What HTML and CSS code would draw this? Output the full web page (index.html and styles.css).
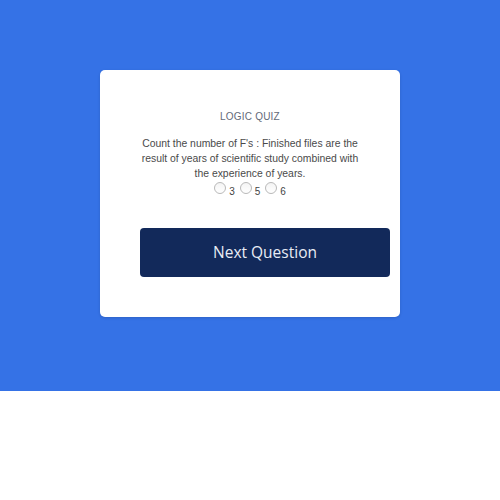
FILE: index.html
```html
<!DOCTYPE html>
<html>
<head>
<meta charset="utf-8">
<link rel="stylesheet" href="styles.css">
</head>
<body>
<section class="hero">
  <div class="card">
    <div class="title">LOGIC QUIZ</div>
    <p class="question">Count the number of F's : Finished files are the result of years of scientific study combined with the experience of years.</p>
    <div class="options"><label class="opt"><input type="radio" name="q">3</label><label class="opt"><input type="radio" name="q">5</label><label class="opt"><input type="radio" name="q">6</label></div>
    <button class="next">Next Question</button>
  </div>
</section>
</body>
</html>
```
FILE: styles.css
```css
html, body { margin: 0; padding: 0; background: #fff; }
body { font-family: "Liberation Sans", Arial, sans-serif; }
.hero {
  background: #3572e6;
  padding: 70px 0 74px;
}
.card {
  width: 300px;
  margin: 0 auto;
  background: #fff;
  border-radius: 5px;
  padding: 41px 0 40px;
  box-sizing: border-box;
  box-shadow: 0 1px 3px rgba(0,0,0,0.15);
}
.title {
  text-align: center;
  font-size: 10px;
  line-height: 12px;
  color: #636a78;
  letter-spacing: 0.2px;
}
.question {
  margin: 13px 38px 0;
  text-align: center;
  font-size: 10.4px;
  line-height: 15px;
  color: #4a4a4a;
}
.options {
  text-align: center;
  font-size: 10px;
  color: #444;
  line-height: 12px;
  padding-top: 1px;
}
.opt input {
  -webkit-appearance: none;
  appearance: none;
  box-sizing: border-box;
  margin: 0 3px 1px 5px;
  width: 12px;
  height: 12px;
  border: 1px solid #b9b9b9;
  border-radius: 50%;
  background: linear-gradient(#f4f4f4, #ffffff);
  vertical-align: baseline;
}
.opt:first-child input { margin-left: 0; }
.next {
  display: block;
  margin: 30px 0 0 40px;
  width: 250px;
  height: 49px;
  padding: 0 0 2px;
  border: none;
  border-radius: 4px;
  background: #12295a;
  color: #e8ecf5;
  font-family: "Open Sans", sans-serif;
  font-size: 15.5px;
  cursor: pointer;
}
```
